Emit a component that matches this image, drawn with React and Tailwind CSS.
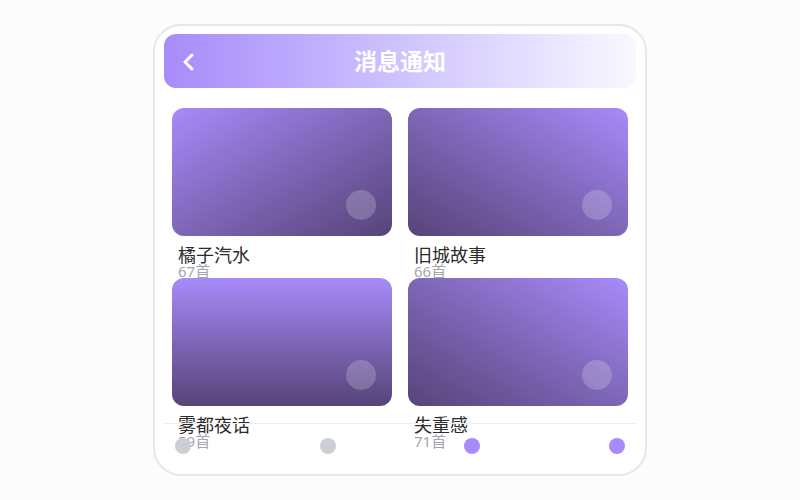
import React from "react";

const items = [
  { title: "橘子汽水", count: "67首", grad: "bg-gradient-to-br from-[#a78bfa] to-[#574479]" },
  { title: "旧城故事", count: "66首", grad: "bg-gradient-to-tr from-[#574479] to-[#a78bfa]" },
  { title: "雾都夜话", count: "59首", grad: "bg-gradient-to-b from-[#a78bfa] to-[#574479]" },
  { title: "失重感", count: "71首", grad: "bg-gradient-to-tr from-[#574479] to-[#a78bfa]" },
];

const dots = ["bg-[#cbcfd4]", "bg-[#cbcfd4]", "bg-[#a78bfa]", "bg-[#a78bfa]"];

export default function App() {
  return (
    <div
      className="w-[800px] h-[500px] bg-[#fcfcfd] flex items-center justify-center"
      style={{ fontFamily: '"Noto Sans", "Noto Sans CJK SC", sans-serif' }}
    >
      <div className="relative w-[494px] h-[452px] bg-white border-2 border-[#e6e7ea] rounded-[28px] overflow-hidden pt-[8px] px-[9px]">
        <div className="relative h-[54px] rounded-[12px] bg-gradient-to-r from-[#a78bfa] to-[#faf8ff] flex items-center justify-center">
          <svg
            className="absolute left-[18px] top-[19px]"
            width="12"
            height="18"
            viewBox="0 0 12 18"
            fill="none"
          >
            <polyline
              points="10,2 3,9 10,16"
              stroke="white"
              strokeWidth="3"
              strokeLinecap="round"
              strokeLinejoin="round"
            />
          </svg>
          <span className="text-white text-[23px] font-bold leading-none">消息通知</span>
        </div>
        <div className="grid grid-cols-2 gap-x-4 gap-y-4 auto-rows-[154px] px-2 mt-[20px]">
          {items.map((it) => (
            <div key={it.title} className="relative">
              <div className={`relative h-[128px] rounded-[12px] ${it.grad}`}>
                <div className="absolute right-4 bottom-4 w-[30px] h-[30px] rounded-full bg-white/20" />
              </div>
              <div className="px-1.5 mt-[10px] text-[18px] leading-[18px] text-[#2b2b2b]">{it.title}</div>
              <div className="px-1.5 text-[15px] leading-[15px] text-[#a3a6ad]">{it.count}</div>
            </div>
          ))}
        </div>
        <div className="absolute bottom-0 left-[9px] right-[9px] border-t border-[#eceef1] pt-[14px] pb-[20px] px-[11px] flex justify-between">
          {dots.map((c, i) => (
            <div key={i} className={`w-4 h-4 rounded-full ${c}`} />
          ))}
        </div>
      </div>
    </div>
  );
}
